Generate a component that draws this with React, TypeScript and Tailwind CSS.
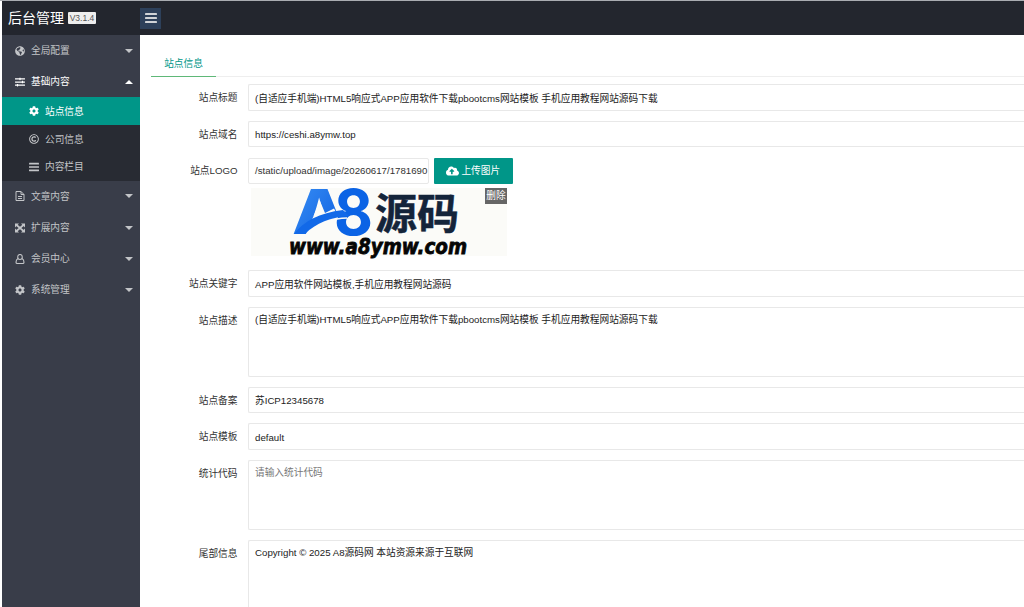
import React from 'react';
import { IconType } from 'react-icons';
import {
  FaCloudUploadAlt,
  FaCog,
  FaGlobeAmericas,
  FaRegCopyright,
  FaSlidersH,
} from 'react-icons/fa';

interface MenuItem {
  label: string;
  icon: IconType | React.FC<{ className?: string }>;
  open?: boolean;
  children?: MenuItem[];
  active?: boolean;
}

const UserOutline: React.FC<{ className?: string }> = ({ className }) => (
  <svg viewBox="0 0 10 10" fill="none" stroke="currentColor" strokeWidth="1.1" className={className}>
    <ellipse cx="5" cy="3" rx="2.3" ry="2.5" />
    <path d="M3 4.600C1.500 5.400 1 7 1 8.200q0 1.300 1.300 1.300h5.400q1.300 0 1.300-1.300C9 7 8.500 5.400 7 4.600" />
  </svg>
);

const FileOutline: React.FC<{ className?: string }> = ({ className }) => (
  <svg viewBox="0 0 10 10" fill="none" stroke="currentColor" strokeWidth="1" className={className}>
    <path d="M1 .5h5l3 3v6H1zM6 .5v3h3M3 5.500h4M3 7.500h4" />
  </svg>
);

const ArrowsOut: React.FC<{ className?: string }> = ({ className }) => (
  <svg viewBox="0 0 10 10" fill="currentColor" className={className}>
    <path d="M0 .5h4L0 4.500zM10 .5H6l4 4zM0 9.500h4l-4-4zM10 9.500H6l4-4z" />
    <path d="M1.500 2l7 6M8.500 2l-7 6" stroke="currentColor" strokeWidth="1.700" />
  </svg>
);

const Bars: React.FC<{ className?: string }> = ({ className }) => (
  <svg viewBox="0 0 12 12" fill="currentColor" className={className}>
    <rect y="1" width="12" height="2" rx=".4" />
    <rect y="5" width="12" height="2" rx=".4" />
    <rect y="9" width="12" height="2" rx=".4" />
  </svg>
);

const menu: MenuItem[] = [
  { label: '全局配置', icon: FaGlobeAmericas },
  {
    label: '基础内容',
    icon: FaSlidersH,
    open: true,
    children: [
      { label: '站点信息', icon: FaCog, active: true },
      { label: '公司信息', icon: FaRegCopyright },
      { label: '内容栏目', icon: Bars },
    ],
  },
  { label: '文章内容', icon: FileOutline },
  { label: '扩展内容', icon: ArrowsOut },
  { label: '会员中心', icon: UserOutline },
  { label: '系统管理', icon: FaCog },
];

const Sidebar = () => (
  <aside className="w-[138px] shrink-0 bg-[#393d49] text-[#c3c5c8]">
    {menu.map((item) => (
      <div key={item.label}>
        <div className={`flex h-[31.200px] items-center pr-[7px] pl-[13px] ${item.open ? 'text-white' : ''}`}>
          <item.icon className="mr-[6px] h-[10px] w-[10px]" />
          <span className="flex-1 pt-[1.500px]">{item.label}</span>
          <svg viewBox="0 0 8 4" className={`h-[4px] w-[8px] fill-current ${item.open ? 'rotate-180' : ''}`}>
            <path d="M0 0h8L4 4z" />
          </svg>
        </div>
        {item.children && (
          <div className="bg-[#282b33]">
            {item.children.map((child) => (
              <div
                key={child.label}
                className={`flex h-[27.800px] items-center pl-[27px] ${child.active ? 'bg-[#009688] text-white' : ''}`}
              >
                <child.icon className="mr-[6px] h-[10px] w-[10px]" />
                <span className="pt-[1.500px]">{child.label}</span>
              </div>
            ))}
          </div>
        )}
      </div>
    ))}
  </aside>
);

const SiteLogo = () => (
  <svg viewBox="0 0 256 69" className="h-[69px] w-[256px] overflow-visible">
    <defs>
      <linearGradient id="mark" x1="0" y1="0" x2="1" y2="1">
        <stop offset="0" stopColor="#3c93f7" />
        <stop offset="1" stopColor="#0757dc" />
      </linearGradient>
    </defs>
    <rect width="256" height="68" fill="#fbfbf8" />
    <text x="41" y="46" fontSize="62" fontWeight="800" textLength="55" lengthAdjust="spacingAndGlyphs" fill="url(#mark)" className="font-[Inter]">A</text>
    {/* opens the lower right of the mark for the swoosh */}
    <path d="M69 13L74 25L83 20.500L98 48H54z" fill="#fbfbf8" />
    <text x="83" y="47" fontSize="63" fontWeight="700" textLength="39" lengthAdjust="spacingAndGlyphs" fill="#0b63e5" className="font-[Inter]">8</text>
    <path d="M76 34C82 31.500 88 30 96 30" fill="none" stroke="#fbfbf8" strokeWidth="1.500" />
    <path d="M43 46C53 33 68 25 92 22L98 28C80 29 65 35 54 46z" fill="#1269e8" />
    <text x="124" y="41" fontSize="42" fontWeight="700" textLength="84" lengthAdjust="spacingAndGlyphs" fill="#14243a" stroke="#14243a" strokeWidth="0.5" className="font-['Noto_Sans_CJK_SC',sans-serif]">源码</text>
    <text x="38" y="66" fontSize="20.5" fontWeight="700" fontStyle="italic" textLength="178" lengthAdjust="spacingAndGlyphs" fill="#050505" stroke="#050505" strokeWidth="0.8" className="font-['DejaVu_Sans',sans-serif]">www.a8ymw.com</text>
  </svg>
);

interface FieldProps {
  label: string;
  value?: string;
  placeholder?: string;
  multiline?: boolean;
}

const Label = ({ text }: { text: string }) => (
  <label className="w-[107.500px] shrink-0 pt-[6px] pr-[10px] text-right leading-[15px] text-[#333]">{text}</label>
);

const Field: React.FC<FieldProps> = ({ label, value, placeholder, multiline }) => (
  <div className="mb-[10px] flex">
    <Label text={label} />
    <div
      className={`flex-1 rounded-l-[2px] border border-r-0 border-[#e8e8e8] pl-[6.500px] leading-[15px] ${
        multiline ? 'h-[70px] pt-[4px]' : 'h-[26.500px] pt-[5.500px]'
      } ${value ? 'text-[#222]' : 'text-[#777]'}`}
    >
      {value || placeholder}
    </div>
  </div>
);

const description = '(自适应手机端)HTML5响应式APP应用软件下载pbootcms网站模板 手机应用教程网站源码下载';

export default function App() {
  return (
    <div className="flex h-[607px] w-[1024px] flex-col overflow-hidden border-t border-[#a9acb1] bg-white pl-[2px] font-['Liberation_Sans','Noto_Sans_CJK_SC',sans-serif] text-[9.700px] whitespace-nowrap">
      <header className="flex h-[34px] shrink-0 items-center bg-[#23262e]">
        <div className="flex w-[138px] items-center pl-[6px]">
          <span className="text-[14px] text-white">后台管理</span>
          <span className="ml-[4px] flex h-[12px] w-[28px] items-center justify-center rounded-[1px] bg-[#eee] text-[8.500px] text-[#555]">V3.1.4</span>
        </div>
        <button className="flex h-[21px] w-[21px] items-center justify-center bg-[#2d405a] text-[#d0d3d7]">
          <Bars className="h-[12px] w-[12px]" />
        </button>
      </header>
      <div className="flex min-h-0 flex-1">
        <Sidebar />
        <main className="min-w-0 flex-1">
          <div className="mt-[14px] ml-[11px] flex h-[28px] border-b border-[#eee]">
            <div className="h-[28px] w-[65px] border-b border-[#5fb878] pt-[7px] text-center leading-[15px] text-[#009688]">站点信息</div>
          </div>
          <div className="pt-[7px]">
            <Field label="站点标题" value={description} />
            <Field label="站点域名" value="https://ceshi.a8ymw.top" />
            <div className="flex h-[113px]">
              <Label text="站点LOGO" />
              <div className="pt-[1px]">
                <div className="flex">
                  <div className="h-[26px] w-[181px] overflow-hidden rounded-[2px] border border-[#e8e8e8] pt-[4px] pl-[6.500px] leading-[15px] text-[#333]">
                    /static/upload/image/20260617/1781690
                  </div>
                  <button className="ml-[5.500px] flex h-[26px] w-[78.500px] items-center justify-center rounded-[1px] bg-[#009688] text-white">
                    <FaCloudUploadAlt className="mr-[2px] h-[12px] w-[13px]" />
                    <span className="pt-[1.500px]">上传图片</span>
                  </button>
                </div>
                <div className="relative mt-[4px] ml-[3.500px] w-[256px]">
                  <SiteLogo />
                  <span className="absolute top-0 left-[234px] flex h-[16px] w-[22px] items-center justify-center bg-[#666] text-white">删除</span>
                </div>
              </div>
            </div>
            <Field label="站点关键字" value="APP应用软件网站模板,手机应用教程网站源码" />
            <Field label="站点描述" value={description} multiline />
            <Field label="站点备案" value="苏ICP12345678" />
            <Field label="站点模板" value="default" />
            <Field label="统计代码" placeholder="请输入统计代码" multiline />
            <Field label="尾部信息" value="Copyright © 2025 A8源码网 本站资源来源于互联网" multiline />
          </div>
        </main>
      </div>
    </div>
  );
}
